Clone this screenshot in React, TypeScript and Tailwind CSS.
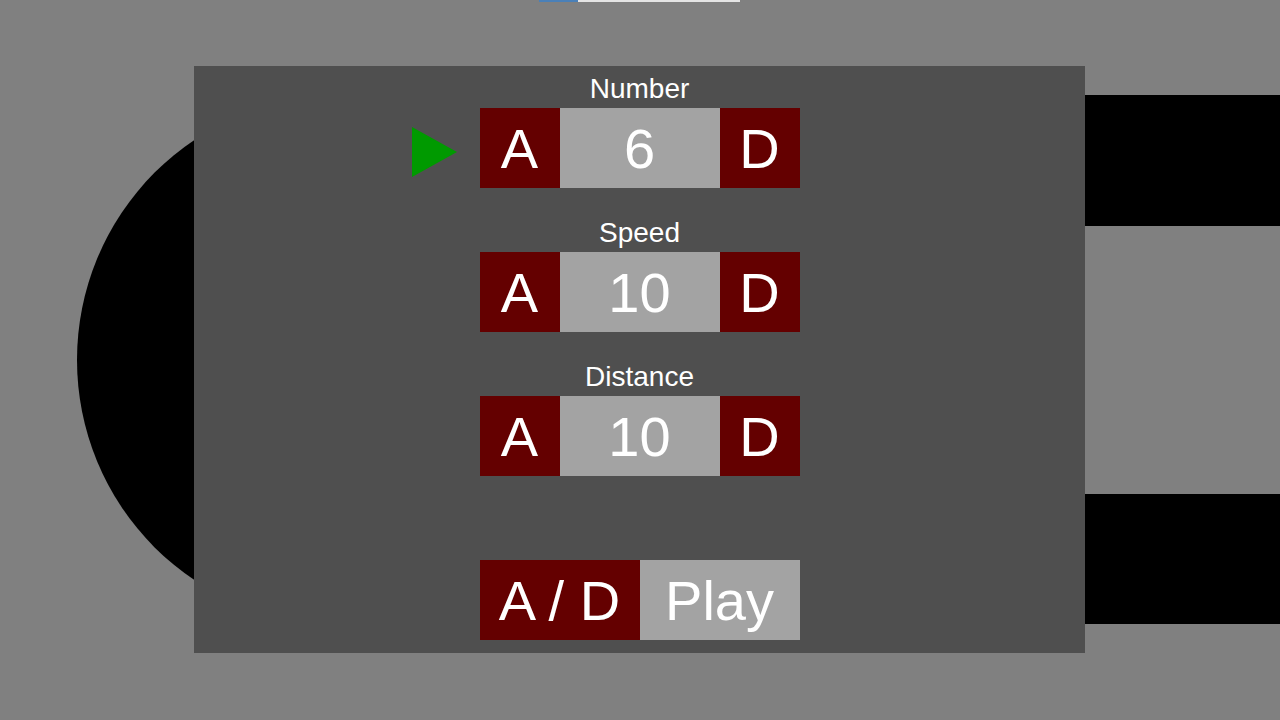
import React from "react";

type Setting = { label: string; value: number; selected?: boolean };

const settings: Setting[] = [
  { label: "Number", value: 6, selected: true },
  { label: "Speed", value: 10 },
  { label: "Distance", value: 10 },
];

const SettingRow = ({ label, value, selected }: Setting) => (
  <div className={"flex flex-col items-center"}>
    <div className={"text-[28px] leading-[32px] text-white"}>{label}</div>
    <div className={"relative flex mt-[3px] h-[80px] text-[56px] leading-none text-white"}>
      {selected && (
        <svg
          className={"absolute right-full mr-[23px] top-[19px]"}
          width={45}
          height={50}
          viewBox={"0 0 45 50"}
        >
          <polygon points={"0,0 45,25 0,50"} fill={"#009a00"} />
        </svg>
      )}
      <div className={"w-[80px] flex items-center justify-center pt-[2px] bg-[#640000]"}>A</div>
      <div className={"w-[160px] flex items-center justify-center pt-[2px] bg-[#a3a3a3]"}>{value}</div>
      <div className={"w-[80px] flex items-center justify-center pt-[2px] bg-[#640000]"}>D</div>
    </div>
  </div>
);

export default function App() {
  return (
    <div
      className={"relative w-[1280px] h-[720px] overflow-hidden bg-[#808080]"}
      style={{ fontFamily: '"Liberation Sans", Arial, sans-serif' }}
    >
      {/* scene behind the menu */}
      <div className={"absolute left-[77px] top-[95px] w-[530px] h-[530px] rounded-full bg-black"} />
      <div className={"absolute left-[1085px] top-[95px] w-[195px] h-[131px] bg-black"} />
      <div className={"absolute left-[1085px] top-[494px] w-[195px] h-[130px] bg-black"} />
      <div className={"absolute left-[539px] top-0 flex h-[2px]"}>
        <div className={"w-[39px] bg-[#4a80b8]"} />
        <div className={"w-[162px] bg-[#e4e4e4]"} />
      </div>

      <div className={"relative ml-[194px] pt-[66px]"}>
        <div className={"flex flex-col items-center w-[891px] h-[587px] bg-[#4f4f4f] pt-[7px]"}>
          <div className={"flex flex-col gap-[29px]"}>
            {settings.map((s) => (
              <SettingRow key={s.label} {...s} />
            ))}
          </div>
          <div className={"flex mt-[84px] h-[80px] text-[56px] leading-none text-white"}>
            <div className={"w-[160px] flex items-center justify-center pt-[2px] bg-[#640000]"}>A / D</div>
            <div className={"w-[160px] flex items-center justify-center pt-[2px] bg-[#a3a3a3]"}>Play</div>
          </div>
        </div>
      </div>
    </div>
  );
}
